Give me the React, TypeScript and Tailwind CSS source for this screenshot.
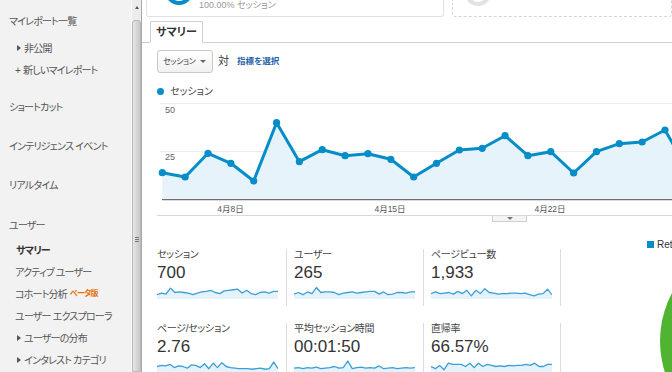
import React from 'react';

const BLUE = '#058dc7';

// main chart, page coords converted to svg coords (x - 157, y - 100)
const chartY = [72.7, 77, 53.3, 63.3, 81, 22.7, 61.7, 49.7, 55.7, 53.7, 59.3, 77, 63.3, 50, 48.3, 35.7, 55.7, 51.7, 73, 51.7, 43.7, 42, 30, 70];
const chartPts = chartY.map((y, i) => [5.3 + i * 22.85, y] as [number, number]);

const sparks: Record<string, number[]> = {
  sessions: [0.3, 0.45, 0.35, 0.9, 0.5, 0.55, 0.5, 0.45, 0.3, 0.45, 0.55, 0.6, 0.7, 0.5, 0.4, 0.65, 0.7, 0.75, 0.8, 0.45, 0.7, 0.4, 0.3, 0.5, 0.55, 0.45, 0.6, 0.6],
  users: [0.35, 0.5, 0.3, 0.55, 0.4, 0.95, 0.5, 0.55, 0.55, 0.5, 0.3, 0.45, 0.5, 0.55, 0.45, 0.5, 0.55, 0.6, 0.6, 0.35, 0.55, 0.3, 0.35, 0.5, 0.5, 0.45, 0.55, 0.55],
  pageviews: [0.4, 0.55, 0.4, 0.45, 0.5, 0.35, 0.6, 0.4, 0.7, 0.2, 0.7, 0.4, 0.85, 0.5, 0.45, 0.35, 0.4, 0.4, 0.45, 0.45, 0.4, 0.45, 0.3, 0.2, 0.35, 0.4, 0.8, 0.3],
  pps: [0.5, 0.6, 0.55, 0.7, 0.4, 0.55, 0.5, 0.35, 0.65, 0.6, 0.4, 0.75, 0.3, 0.8, 0.4, 0.85, 0.5, 0.4, 0.35, 0.3, 0.3, 0.3, 0.25, 0.3, 0.35, 0.25, 0.3, 0.9, 0.3],
  duration: [0.35, 0.4, 0.3, 0.4, 0.35, 0.45, 0.3, 0.35, 0.4, 0.5, 0.35, 0.4, 1.0, 0.3, 0.4, 0.45, 0.35, 0.4, 0.35, 0.55, 0.3, 0.35, 0.4, 0.3, 0.35, 0.4, 0.35, 0.4],
  bounce: [0.5, 0.3, 0.6, 0.2, 0.8, 0.7, 0.7, 0.7, 0.5, 0.8, 0.4, 0.8, 0.5, 0.7, 0.6, 0.5, 0.55, 0.5, 0.6, 0.55, 0.6, 0.6, 0.7, 0.6, 0.8, 0.5, 0.5, 0.7, 0.7],
};

const Spark = ({ data }: { data: number[] }) => {
  const w = 121;
  const h = 14;
  const pts = data.map((v, i) => [(i * w) / (data.length - 1), h - 1 - v * (h - 3)]);
  const line = pts.map((p) => p.join(',')).join(' ');
  return (
    <svg width={w} height={h} className="block">
      <polygon points={`0,${h} ${line} ${w},${h}`} fill="#e5f2fa" />
      <polyline points={line} fill="none" stroke="#3a9fd6" strokeWidth={1.3} strokeLinejoin="round" />
    </svg>
  );
};

const Metric = ({ label, value, data }: { label: string; value: string; data: number[] }) => (
  <div className="w-[130px] h-[57px] border-r border-[#dcdcdc]">
    <div className="text-[10px] leading-[12px] text-[#444] tracking-[-0.3px]">{label}</div>
    <div className="mt-[2px] text-[17px] leading-[20px] text-[#333]">{value}</div>
    <div className="mt-[2px]">
      <Spark data={data} />
    </div>
  </div>
);

const Tri = () => (
  <span className="inline-block w-0 h-0 border-y-[3px] border-y-transparent border-l-[4px] border-l-[#555] mr-[3px]" />
);

const NavItem = ({ children, className = '' }: { children: React.ReactNode; className?: string }) => (
  <div className={`h-[22px] flex items-center whitespace-nowrap ${className}`}>{children}</div>
);

export default function App() {
  const line = chartPts.map((p) => p.join(',')).join(' ');
  const area = `${chartPts[0][0]},99.7 ${line} ${chartPts[chartPts.length - 1][0]},99.7`;

  return (
    <div className="w-[672px] h-[372px] overflow-hidden flex bg-white [font-family:'Liberation_Sans','Noto_Sans_CJK_JP',sans-serif] [font-feature-settings:'palt']">
      {/* sidebar */}
      <div className="w-[131px] shrink-0 overflow-hidden bg-[#f2f2f2] text-[10px] tracking-[-0.8px] text-[#555] pt-[10px]">
        <NavItem className="pl-[9px]">マイレポート一覧</NavItem>
        <NavItem className="pl-[17px] mt-[5px]">
          <Tri />
          非公開
        </NavItem>
        <NavItem className="pl-[15px]">
          <span className="mr-[3px]">+</span>新しいマイレポート
        </NavItem>
        <NavItem className="pl-[9px] mt-[15px]">ショートカット</NavItem>
        <NavItem className="pl-[9px] mt-[17px]">インテリジェンス イベント</NavItem>
        <NavItem className="pl-[9px] mt-[17px]">リアルタイム</NavItem>
        <NavItem className="pl-[9px] mt-[18px]">ユーザー</NavItem>
        <NavItem className="pl-[16px] mt-[3px] font-bold text-[#333]">サマリー</NavItem>
        <NavItem className="pl-[15px]">アクティブ ユーザー</NavItem>
        <NavItem className="pl-[15px]">
          コホート分析<span className="ml-[3px] text-[8px] font-bold text-[#e8710a]">ベータ版</span>
        </NavItem>
        <NavItem className="pl-[15px]">ユーザー エクスプローラ</NavItem>
        <NavItem className="pl-[17px]">
          <Tri />
          ユーザーの分布
        </NavItem>
        <NavItem className="pl-[17px]">
          <Tri />
          インタレスト カテゴリ
        </NavItem>
      </div>

      {/* scrollbar */}
      <div className="w-[11px] shrink-0 flex flex-col bg-[#ececec] border-l border-[#fafafa] border-r border-r-[#a8a8a8]">
        <div className="h-[20px] flex items-center justify-center">
          <span className="w-0 h-0 border-x-[2px] border-x-transparent border-b-[3px] border-b-[#555] -mt-[5px]" />
        </div>
        <div className="flex-1 rounded-t-[3px] border border-[#b9b9b9] bg-gradient-to-r from-[#e6e6e6] to-[#c8c8c8] flex flex-col items-center pt-[216px]">
          <div className="w-[4px] h-[1px] bg-[#777]" />
          <div className="w-[4px] h-[1px] bg-[#777] mt-[1px]" />
          <div className="w-[4px] h-[1px] bg-[#777] mt-[1px]" />
        </div>
      </div>

      {/* main */}
      <div className="flex-1 min-w-0 overflow-hidden flex flex-col">
        {/* top cards */}
        <div className="h-[17px] flex pl-[4px] gap-[8px] shrink-0">
          <div className="w-[338px] h-[17px] border border-t-0 border-[#e2e2e2] rounded-b-[3px] overflow-hidden flex items-end">
            <div className="ml-[18px] mb-[11px] w-[28px] h-[28px] shrink-0 rounded-full border-[4px] border-[#058dc7]" />
            <div className="ml-[6px] mb-[6px] text-[9px] leading-[10px] text-[#999] whitespace-nowrap">100.00% セッション</div>
          </div>
          <div className="w-[220px] shrink-0 h-[17px] border border-t-0 border-dashed border-[#d6d6d6] rounded-b-[3px] overflow-hidden flex items-end">
            <div className="ml-[12px] mb-[10px] w-[26px] h-[26px] shrink-0 rounded-full border-[4px] border-[#e2e2e2]" />
          </div>
        </div>

        {/* tab */}
        <div className="mt-[4px] h-[22px] shrink-0 border-b border-[#d0d0d0] flex items-end pl-[8px]">
          <div className="h-[22px] -mb-px px-[5px] border border-[#d0d0d0] border-b-white bg-white rounded-t-[2px] text-[11px] font-bold text-[#333] flex items-center">
            サマリー
          </div>
        </div>

        {/* selector */}
        <div className="mt-[7px] h-[23px] shrink-0 flex items-center pl-[15px]">
          <div className="w-[56px] h-[23px] border border-[#c8c8c8] rounded-[3px] bg-gradient-to-b from-white to-[#f1f1f1] flex items-center justify-between pl-[5px] pr-[6px]">
            <span className="text-[8px] tracking-[-0.4px] text-[#444] whitespace-nowrap">セッション</span>
            <span className="w-0 h-0 border-x-[3px] border-x-transparent border-t-[3px] border-t-[#666]" />
          </div>
          <span className="ml-[5px] text-[11px] text-[#333]">対</span>
          <span className="ml-[8px] text-[8.5px] font-bold text-[#1f5fa9] whitespace-nowrap">指標を選択</span>
        </div>

        {/* legend */}
        <div className="mt-[12px] h-[12px] shrink-0 flex items-center pl-[15px]">
          <span className="w-[7px] h-[7px] rounded-full bg-[#058dc7]" />
          <span className="ml-[6px] text-[10px] text-[#444]">セッション</span>
        </div>

        {/* chart */}
        <svg width={515} height={114} className="block mt-[3px] ml-[15px] shrink-0 overflow-hidden">
          <line x1={3} x2={515} y1={3.5} y2={3.5} stroke="#ececec" />
          <line x1={3} x2={515} y1={51.5} y2={51.5} stroke="#ececec" />
          <text x={8} y={13} fontSize={9} fill="#666" fontFamily="Liberation Sans, sans-serif">50</text>
          <text x={8} y={60} fontSize={9} fill="#666" fontFamily="Liberation Sans, sans-serif">25</text>
          <polygon points={area} fill="#e6f3fa" />
          <line x1={5} x2={515} y1={99.7} y2={99.7} stroke="#6f6f6f" strokeWidth={1.2} />
          <polyline points={line} fill="none" stroke={BLUE} strokeWidth={3} strokeLinejoin="round" />
          {chartPts.map(([x, y], i) => (
            <circle key={i} cx={x} cy={y} r={3.6} fill={BLUE} />
          ))}
          {[['4月8日', 73.5], ['4月15日', 233], ['4月22日', 393]].map(([t, x]) => (
            <text key={t as string} x={x as number} y={112} fontSize={8.5} fill="#555" textAnchor="middle" fontFamily="Liberation Sans, Noto Sans CJK JP, sans-serif">
              {t}
            </text>
          ))}
        </svg>

        {/* divider with collapse tab */}
        <div className="ml-[15px] mt-[1px] shrink-0 border-t border-[#d8d8d8] h-[6px]">
          <div className="ml-[335px] w-[35px] h-[6px] border border-t-0 border-[#cfcfcf] bg-[#f4f4f4] flex items-center justify-center">
            <span className="w-0 h-0 border-x-[3px] border-x-transparent border-t-[3px] border-t-[#777]" />
          </div>
        </div>

        {/* metrics */}
        <div className="flex shrink-0">
          <div className="pl-[15px] pt-[28px] shrink-0">
            <div className="flex gap-[7px]">
              <Metric label="セッション" value="700" data={sparks.sessions} />
              <Metric label="ユーザー" value="265" data={sparks.users} />
              <Metric label="ページビュー数" value="1,933" data={sparks.pageviews} />
            </div>
            <div className="flex gap-[7px] mt-[17px]">
              <Metric label="ページ/セッション" value="2.76" data={sparks.pps} />
              <Metric label="平均セッション時間" value="00:01:50" data={sparks.duration} />
              <Metric label="直帰率" value="66.57%" data={sparks.bounce} />
            </div>
          </div>
          <div className="flex-1 min-w-0 flex flex-col">
            <div className="mt-[16px] ml-[86px] flex items-center whitespace-nowrap">
              <span className="w-[7px] h-[7px] shrink-0 bg-[#058dc7]" />
              <span className="ml-[3px] text-[10px] text-[#333]">Returning Visitor</span>
            </div>
            <svg width={111} height={130} className="block mt-[4px]">
              <circle cx={201} cy={85} r={102} fill="#50b432" />
            </svg>
          </div>
        </div>
      </div>
    </div>
  );
}
